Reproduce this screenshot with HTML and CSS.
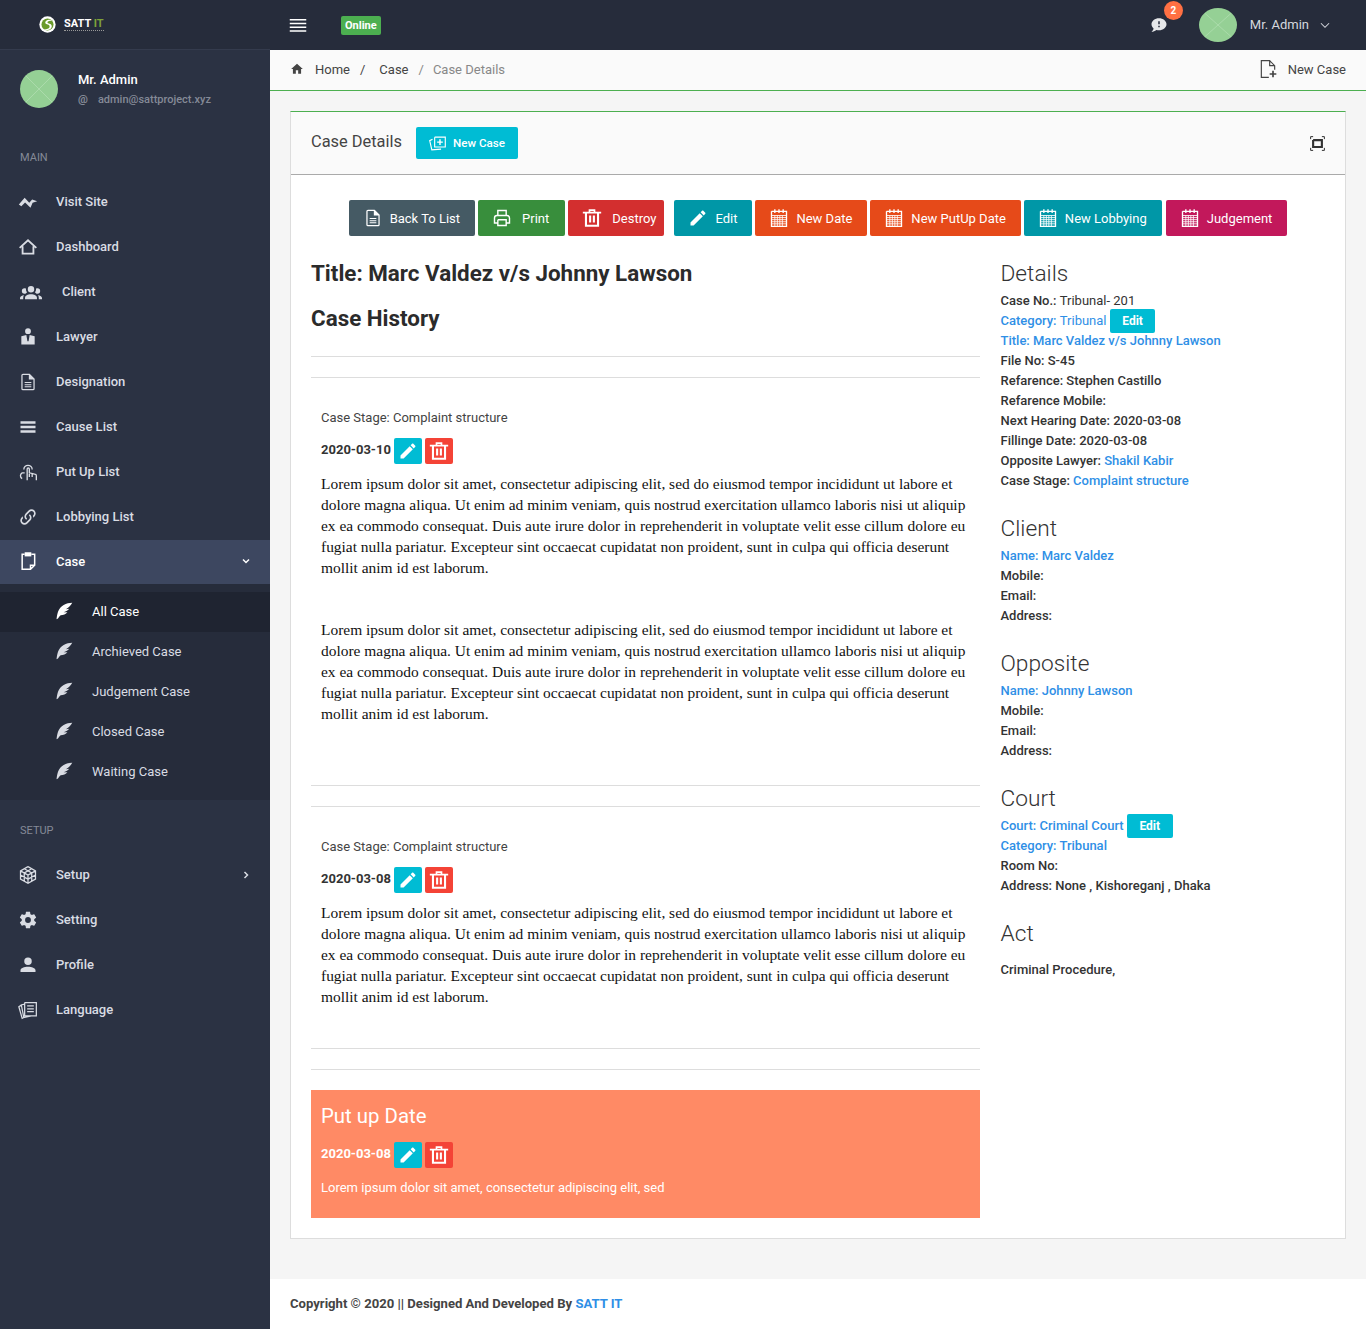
FILE: index.html
```html
<!DOCTYPE html>
<html>
  <head>
    <title>Case Details</title>
    <meta charset="utf-8" />
    <meta name="viewport" content="width=device-width, initial-scale=1.0" />
    <link rel="stylesheet" href="styles.css">
  </head>
  <body>
    <svg class="sprite" xmlns="http://www.w3.org/2000/svg">
      <symbol id="i-menu" viewBox="0 0 24 24"><path d="M1,4H23V6H1V4M1,9H23V11H1V9M1,14H23V16H1V14M1,19H23V21H1V19Z"/></symbol>
      <symbol id="i-home" viewBox="0 0 24 24"><path d="M10,20V14H14V20H19V12H22L12,3L2,12H5V20H10Z"/></symbol>
      <symbol id="i-home-o" viewBox="0 0 24 24"><path fill="none" stroke="currentColor" stroke-width="2.2" d="M2,13L12,4L22,13M5.5,11V20H18.5V11"/></symbol>
      <symbol id="i-pulse" viewBox="0 0 24 24"><path d="M1,15L8,7L13.5,13L17,9L23,11L17.5,13L15,19L8.5,12.5L4,17Z"/></symbol>
      <symbol id="i-group" viewBox="0 0 24 24"><path d="M12,5.5A3.5,3.5 0 0,1 15.5,9A3.5,3.5 0 0,1 12,12.5A3.5,3.5 0 0,1 8.5,9A3.5,3.5 0 0,1 12,5.5M5,8C5.56,8 6.08,8.15 6.53,8.42C6.38,9.85 6.8,11.27 7.66,12.38C7.16,13.34 6.16,14 5,14A3,3 0 0,1 2,11A3,3 0 0,1 5,8M19,8A3,3 0 0,1 22,11A3,3 0 0,1 19,14C17.84,14 16.84,13.34 16.34,12.38C17.2,11.27 17.62,9.85 17.47,8.42C17.92,8.15 18.44,8 19,8M5.5,18.25C5.5,16.18 8.41,14.5 12,14.5C15.59,14.5 18.5,16.18 18.5,18.25V20H5.5V18.25M0,20V18.5C0,17.11 1.89,15.94 4.45,15.6C3.86,16.28 3.5,17.22 3.5,18.25V20H0M24,20H20.5V18.25C20.5,17.22 20.14,16.28 19.55,15.6C22.11,15.94 24,17.11 24,18.5V20Z"/></symbol>
      <symbol id="i-lawyer" viewBox="0 0 24 24"><path d="M12,1.5A3.5,3.5 0 0,1 15.5,5A3.5,3.5 0 0,1 12,8.5A3.5,3.5 0 0,1 8.5,5A3.5,3.5 0 0,1 12,1.5M4,11L10,9.5L11.3,17H12.7L14,9.5L20,11V21H4V11Z"/></symbol>
      <symbol id="i-file" viewBox="0 0 24 24"><path d="M6,2A2,2 0 0,0 4,4V20A2,2 0 0,0 6,22H18A2,2 0 0,0 20,20V8L14,2H6M6,3.5H13V9H18.5V20A.5,.5 0 0,1 18,20.5H6A.5,.5 0 0,1 5.5,20V4A.5,.5 0 0,1 6,3.5M8,12V13.2H16V12H8M8,14.6V15.8H16V14.6H8M8,17.2V18.4H16V17.2H8Z"/></symbol>
      <symbol id="i-lines" viewBox="0 0 24 24"><path d="M3,5H21V8H3V5M3,10.5H21V13.5H3V10.5M3,16H21V19H3V16Z"/></symbol>
      <symbol id="i-touch" viewBox="0 0 24 24"><path fill="none" stroke="currentColor" stroke-width="1.6" d="M7,9A5,5 0 0,1 17,9M5,20A4,4 0 0,1 5,13H8M11,22V8.5A1.3,1.3 0 0,1 13.6,8.5V13L20,14.5A2,2 0 0,1 22,16.5V22M13.6,14V18M17,14.5V18"/></symbol>
      <symbol id="i-link" viewBox="0 0 24 24"><path d="M10.59,13.41C11,13.8 11,14.44 10.59,14.83C10.2,15.22 9.56,15.22 9.17,14.83C7.22,12.88 7.22,9.71 9.17,7.76V7.76L12.71,4.22C14.66,2.27 17.83,2.27 19.78,4.22C21.73,6.17 21.73,9.34 19.78,11.29L18.29,12.78C18.3,11.96 18.17,11.14 17.89,10.36L18.36,9.88C19.54,8.71 19.54,6.81 18.36,5.64C17.19,4.46 15.29,4.46 14.12,5.64L10.59,9.17C9.41,10.34 9.41,12.24 10.59,13.41M13.41,9.17C13.8,8.78 14.44,8.78 14.83,9.17C16.78,11.12 16.78,14.29 14.83,16.24V16.24L11.29,19.78C9.34,21.73 6.17,21.73 4.22,19.78C2.27,17.83 2.27,14.66 4.22,12.71L5.71,11.22C5.7,12.04 5.83,12.86 6.11,13.65L5.64,14.12C4.46,15.29 4.46,17.19 5.64,18.36C6.81,19.54 8.71,19.54 9.88,18.36L13.41,14.83C14.59,13.66 14.59,11.76 13.41,10.59C13,10.2 13,9.56 13.41,9.17Z"/></symbol>
      <symbol id="i-clip" viewBox="0 0 24 24"><path fill="none" stroke="currentColor" stroke-width="1.8" d="M8,4H5V22H15L20,17V4H16M15,22V17H20"/><path d="M8,1.5H16V6.5H8Z"/></symbol>
      <symbol id="i-cube" viewBox="0 0 24 24"><path fill="none" stroke="currentColor" stroke-width="1.5" d="M12,2L21,7V17L12,22L3,17V7L12,2M3,7L12,12L21,7M12,12V22M7.5,4.5L16.5,9.5V19.5M16.5,4.5L7.5,9.5V19.5M3,12L12,17L21,12"/></symbol>
      <symbol id="i-cog" viewBox="0 0 24 24"><path d="M12,15.5A3.5,3.5 0 0,1 8.5,12A3.5,3.5 0 0,1 12,8.5A3.5,3.5 0 0,1 15.5,12A3.5,3.5 0 0,1 12,15.5M19.43,12.97C19.47,12.65 19.5,12.33 19.5,12C19.5,11.67 19.47,11.34 19.43,11L21.54,9.37C21.73,9.22 21.78,8.95 21.66,8.73L19.66,5.27C19.54,5.05 19.27,4.96 19.05,5.05L16.56,6.05C16.04,5.66 15.5,5.32 14.87,5.07L14.5,2.42C14.46,2.18 14.25,2 14,2H10C9.75,2 9.54,2.18 9.5,2.42L9.13,5.07C8.5,5.32 7.96,5.66 7.44,6.05L4.95,5.05C4.73,4.96 4.46,5.05 4.34,5.27L2.34,8.73C2.21,8.95 2.27,9.22 2.46,9.37L4.57,11C4.53,11.34 4.5,11.67 4.5,12C4.5,12.33 4.53,12.65 4.57,12.97L2.46,14.63C2.27,14.78 2.21,15.05 2.34,15.27L4.34,18.73C4.46,18.95 4.73,19.03 4.95,18.95L7.44,17.94C7.96,18.34 8.5,18.68 9.13,18.93L9.5,21.58C9.54,21.82 9.75,22 10,22H14C14.25,22 14.46,21.82 14.5,21.58L14.87,18.93C15.5,18.67 16.04,18.34 16.56,17.94L19.05,18.95C19.27,19.03 19.54,18.95 19.66,18.73L21.66,15.27C21.78,15.05 21.73,14.78 21.54,14.63L19.43,12.97Z"/></symbol>
      <symbol id="i-user" viewBox="0 0 24 24"><path d="M12,3A4.5,4.5 0 0,1 16.5,7.5A4.5,4.5 0 0,1 12,12A4.5,4.5 0 0,1 7.5,7.5A4.5,4.5 0 0,1 12,3M12,14C16.42,14 21,15.79 21,18V20.5H3V18C3,15.79 7.58,14 12,14Z"/></symbol>
      <symbol id="i-news" viewBox="0 0 24 24"><path fill="none" stroke="currentColor" stroke-width="1.5" d="M8,3H22V19H8V3M11,7H19M11,10.5H19M11,14H19M8,5L4,6L7,21L16,19M4,6L1,8L5,22L7,21"/></symbol>
      <symbol id="i-feather" viewBox="0 0 24 24"><path d="M23,1C15,1 7,5 4,13C3,16 2.5,19 2,23L4,22C5,20 6,18.5 7.5,17.5C11,17.5 14.5,16 16.5,13.5L11.5,13.5C15,12.5 17.5,11 19,9L14.5,9.5C18,7.5 21,5 23,1Z"/></symbol>
      <symbol id="i-down" viewBox="0 0 24 24"><path fill="none" stroke="currentColor" stroke-width="3" d="M6,9L12,15L18,9"/></symbol>
      <symbol id="i-down-thin" viewBox="0 0 24 24"><path fill="none" stroke="currentColor" stroke-width="1.8" d="M5,9L12,16L19,9"/></symbol>
      <symbol id="i-right" viewBox="0 0 24 24"><path fill="none" stroke="currentColor" stroke-width="3" d="M9,6L15,12L9,18"/></symbol>
      <symbol id="i-chat" viewBox="0 0 24 24"><path d="M12,3C6.5,3 2,6.58 2,11C2.05,13.15 3.06,15.17 4.75,16.5C4.75,17.1 4.33,18.67 2,21C4.37,20.89 6.64,20 8.47,18.5C9.61,18.83 10.81,19 12,19C17.5,19 22,15.42 22,11C22,6.58 17.5,3 12,3M13,15H11V13H13V15M13,11H11V7H13V11Z"/></symbol>
      <symbol id="i-file-plus" viewBox="0 0 24 24"><path fill="none" stroke="currentColor" stroke-width="1.4" d="M13,22H4V2H14L20,8V13M14,2V8H20"/><path d="M17,14H19V17H22V19H19V22H17V19H14V17H17V14Z"/></symbol>
      <symbol id="i-full" viewBox="0 0 24 24"><path fill="none" stroke="currentColor" stroke-width="3.4" d="M5,6.5H19V17.5H5V6.5"/><path fill="none" stroke="currentColor" stroke-width="1.6" d="M1,5V1H5M19,1H23V5M23,19V23H19M5,23H1V19"/></symbol>
      <symbol id="i-cards" viewBox="0 0 24 24"><path fill="none" stroke="currentColor" stroke-width="1.6" d="M8,3H23V17H8V3M5,6L1,8L4,21L17,20"/><path d="M14.5,6H16.5V9H19.5V11H16.5V14H14.5V11H11.5V9H14.5V6Z"/></symbol>
      <symbol id="i-print" viewBox="0 0 24 24"><path fill="none" stroke="currentColor" stroke-width="1.7" d="M7,8V3H17V8M7,18H3V12A3,3 0 0,1 6,9H18A3,3 0 0,1 21,12V18H17M7,14H17V21H7V14"/></symbol>
      <symbol id="i-trash" viewBox="0 0 24 24"><path d="M8,1.5H16V4.5H23V6.5H20.5V22.5H3.5V6.5H1V4.5H8V1.5M10,3.5V4.5H14V3.5H10M6,6.5V20H18V6.5H6M8.5,9H11V17.5H8.5V9M13,9H15.5V17.5H13V9Z"/></symbol>
      <symbol id="i-pencil" viewBox="0 0 24 24"><path d="M20.71,7.04C21.1,6.65 21.1,6 20.71,5.63L18.37,3.29C18,2.9 17.35,2.9 16.96,3.29L15.12,5.12L18.87,8.87M3,17.25V21H6.75L17.81,9.93L14.06,6.18L3,17.25Z"/></symbol>
      <symbol id="i-cal" viewBox="0 0 24 24"><path fill="none" stroke="currentColor" stroke-width="1.6" d="M3,4H21V22H3V4M7,1.5V6M17,1.5V6M12,1.5V6"/><path fill="none" stroke="currentColor" d="M3,9H21M3,11.5H21M3,14H21M3,16.5H21M3,19H21M7,9V22M10,9V22M13,9V22M16,9V22"/></symbol>
      <symbol id="i-avatar" viewBox="0 0 38 38" preserveAspectRatio="none"><circle cx="19" cy="19" r="19" fill="#95d095"/><path d="M6,6L32,32M32,6L6,32" stroke="#b5e0b5" stroke-width=".7"/></symbol>
    </svg>

    <header class="topbar">
      <div class="brand">
        <svg class="logo" viewBox="0 0 24 24"><circle cx="12" cy="12" r="11.5" fill="#fff"/><circle cx="12" cy="12" r="8.5" fill="#6a9a2b"/><path d="M19,6C14,4 8,6 9,10C10,13 15,11 15,15C15,18 10,19 6,18C10,21 18,20 18,14C18,10 12,11 12,9C12,7 16,7 19,6Z" fill="#fff"/></svg>
        <span class="brand-name">SATT <span class="brand-it">IT</span></span>
      </div>
      <div class="topbar-main">
        <svg class="ico menu-ico"><use href="#i-menu"/></svg>
        <span class="online">Online</span>
        <div class="topbar-right">
          <span class="notify">
            <svg class="ico chat-ico"><use href="#i-chat"/></svg>
            <span class="notify-count">2</span>
          </span>
          <svg class="top-avatar"><use href="#i-avatar"/></svg>
          <span class="top-name">Mr. Admin</span>
          <svg class="ico top-caret"><use href="#i-down-thin"/></svg>
        </div>
      </div>
    </header>

    <div class="layout">
      <aside class="sidebar">
        <div class="profile">
          <svg class="side-avatar"><use href="#i-avatar"/></svg>
          <div>
            <div class="profile-name">Mr. Admin</div>
            <div class="profile-mail"><span class="at">@</span>admin@sattproject.xyz</div>
          </div>
        </div>

        <div class="nav-label nav-label-main">MAIN</div>
        <a class="nav-item"><svg class="ico"><use href="#i-pulse"/></svg>Visit Site</a>
        <a class="nav-item"><svg class="ico"><use href="#i-home-o"/></svg>Dashboard</a>
        <a class="nav-item nav-client"><svg class="ico"><use href="#i-group"/></svg>Client</a>
        <a class="nav-item"><svg class="ico"><use href="#i-lawyer"/></svg>Lawyer</a>
        <a class="nav-item"><svg class="ico"><use href="#i-file"/></svg>Designation</a>
        <a class="nav-item"><svg class="ico"><use href="#i-lines"/></svg>Cause List</a>
        <a class="nav-item"><svg class="ico"><use href="#i-touch"/></svg>Put Up List</a>
        <a class="nav-item"><svg class="ico"><use href="#i-link"/></svg>Lobbying List</a>
        <a class="nav-item active"><svg class="ico"><use href="#i-clip"/></svg>Case<svg class="ico nav-caret"><use href="#i-down"/></svg></a>
        <div class="subnav">
          <a class="sub-item current"><svg class="ico"><use href="#i-feather"/></svg>All Case</a>
          <a class="sub-item"><svg class="ico"><use href="#i-feather"/></svg>Archieved Case</a>
          <a class="sub-item"><svg class="ico"><use href="#i-feather"/></svg>Judgement Case</a>
          <a class="sub-item"><svg class="ico"><use href="#i-feather"/></svg>Closed Case</a>
          <a class="sub-item"><svg class="ico"><use href="#i-feather"/></svg>Waiting Case</a>
        </div>

        <div class="nav-label nav-label-setup">SETUP</div>
        <a class="nav-item"><svg class="ico"><use href="#i-cube"/></svg>Setup<svg class="ico nav-caret"><use href="#i-right"/></svg></a>
        <a class="nav-item"><svg class="ico"><use href="#i-cog"/></svg>Setting</a>
        <a class="nav-item"><svg class="ico"><use href="#i-user"/></svg>Profile</a>
        <a class="nav-item"><svg class="ico"><use href="#i-news"/></svg>Language</a>
      </aside>

      <main class="main">
        <div class="crumbs">
          <svg class="ico crumb-home"><use href="#i-home"/></svg>
          <span class="crumb">Home</span><span class="crumb-sep">/</span>
          <span class="crumb">Case</span><span class="crumb-sep crumb-sep-last">/</span>
          <span class="crumb-now">Case Details</span>
          <span class="crumb-action"><svg class="ico"><use href="#i-file-plus"/></svg>New Case</span>
        </div>

        <section class="card">
          <div class="card-head">
            <h2 class="card-title">Case Details</h2>
            <a class="btn-new"><svg class="ico"><use href="#i-cards"/></svg>New Case</a>
            <svg class="ico card-full"><use href="#i-full"/></svg>
          </div>

          <div class="card-body">
            <div class="actions">
              <a class="btn btn-slate"><svg class="ico"><use href="#i-file"/></svg>Back To List</a>
              <a class="btn btn-green btn-wide"><svg class="ico"><use href="#i-print"/></svg>Print</a>
              <a class="btn btn-red btn-wide btn-tight"><svg class="ico"><use href="#i-trash"/></svg>Destroy</a>
              <a class="btn btn-teal btn-edit"><svg class="ico"><use href="#i-pencil"/></svg>Edit</a>
              <a class="btn btn-orange"><svg class="ico"><use href="#i-cal"/></svg>New Date</a>
              <a class="btn btn-orange"><svg class="ico"><use href="#i-cal"/></svg>New PutUp Date</a>
              <a class="btn btn-teal"><svg class="ico"><use href="#i-cal"/></svg>New Lobbying</a>
              <a class="btn btn-pink"><svg class="ico"><use href="#i-cal"/></svg>Judgement</a>
            </div>

            <div class="columns">
              <div class="history">
                <h1 class="case-title">Title: Marc Valdez v/s Johnny Lawson</h1>
                <h1 class="case-sub">Case History</h1>
                <hr class="rule rule-first">
                <hr class="rule">

                <article class="entry">
                  <p class="stage">Case Stage: Complaint structure</p>
                  <div class="date-row">
                    <b>2020-03-10</b>
                    <a class="tool tool-edit"><svg class="ico"><use href="#i-pencil"/></svg></a>
                    <a class="tool tool-del"><svg class="ico"><use href="#i-trash"/></svg></a>
                  </div>
                  <p class="lorem">Lorem ipsum dolor sit amet, consectetur adipiscing elit, sed do eiusmod tempor incididunt ut labore et dolore magna aliqua. Ut enim ad minim veniam, quis nostrud exercitation ullamco laboris nisi ut aliquip ex ea commodo consequat. Duis aute irure dolor in reprehenderit in voluptate velit esse cillum dolore eu fugiat nulla pariatur. Excepteur sint occaecat cupidatat non proident, sunt in culpa qui officia deserunt mollit anim id est laborum.</p>
                  <p class="lorem lorem-next">Lorem ipsum dolor sit amet, consectetur adipiscing elit, sed do eiusmod tempor incididunt ut labore et dolore magna aliqua. Ut enim ad minim veniam, quis nostrud exercitation ullamco laboris nisi ut aliquip ex ea commodo consequat. Duis aute irure dolor in reprehenderit in voluptate velit esse cillum dolore eu fugiat nulla pariatur. Excepteur sint occaecat cupidatat non proident, sunt in culpa qui officia deserunt mollit anim id est laborum.</p>
                </article>
                <hr class="rule">
                <hr class="rule">

                <article class="entry entry-short">
                  <p class="stage">Case Stage: Complaint structure</p>
                  <div class="date-row">
                    <b>2020-03-08</b>
                    <a class="tool tool-edit"><svg class="ico"><use href="#i-pencil"/></svg></a>
                    <a class="tool tool-del"><svg class="ico"><use href="#i-trash"/></svg></a>
                  </div>
                  <p class="lorem">Lorem ipsum dolor sit amet, consectetur adipiscing elit, sed do eiusmod tempor incididunt ut labore et dolore magna aliqua. Ut enim ad minim veniam, quis nostrud exercitation ullamco laboris nisi ut aliquip ex ea commodo consequat. Duis aute irure dolor in reprehenderit in voluptate velit esse cillum dolore eu fugiat nulla pariatur. Excepteur sint occaecat cupidatat non proident, sunt in culpa qui officia deserunt mollit anim id est laborum.</p>
                </article>
                <hr class="rule">
                <hr class="rule">

                <div class="putup">
                  <h3 class="putup-title">Put up Date</h3>
                  <div class="date-row">
                    <b>2020-03-08</b>
                    <a class="tool tool-edit"><svg class="ico"><use href="#i-pencil"/></svg></a>
                    <a class="tool tool-del"><svg class="ico"><use href="#i-trash"/></svg></a>
                  </div>
                  <p class="putup-text">Lorem ipsum dolor sit amet, consectetur adipiscing elit, sed</p>
                </div>
              </div>

              <div class="info">
                <h3 class="info-title">Details</h3>
                <div class="info-line">Case No.: <span class="plain">Tribunal- 201</span></div>
                <div class="info-line blue">Category: <span class="plain">Tribunal</span> <a class="btn-mini">Edit</a></div>
                <div class="info-line blue">Title: Marc Valdez v/s Johnny Lawson</div>
                <div class="info-line">File No: S-45</div>
                <div class="info-line">Refarence: Stephen Castillo</div>
                <div class="info-line">Refarence Mobile:</div>
                <div class="info-line">Next Hearing Date: 2020-03-08</div>
                <div class="info-line">Fillinge Date: 2020-03-08</div>
                <div class="info-line">Opposite Lawyer: <span class="blue">Shakil Kabir</span></div>
                <div class="info-line">Case Stage: <span class="blue">Complaint structure</span></div>

                <h3 class="info-title info-gap">Client</h3>
                <div class="info-line blue">Name: Marc Valdez</div>
                <div class="info-line">Mobile:</div>
                <div class="info-line">Email:</div>
                <div class="info-line">Address:</div>

                <h3 class="info-title info-gap">Opposite</h3>
                <div class="info-line blue">Name: Johnny Lawson</div>
                <div class="info-line">Mobile:</div>
                <div class="info-line">Email:</div>
                <div class="info-line">Address:</div>

                <h3 class="info-title info-gap">Court</h3>
                <div class="info-line blue">Court: Criminal Court <a class="btn-mini">Edit</a></div>
                <div class="info-line blue">Category: Tribunal</div>
                <div class="info-line">Room No:</div>
                <div class="info-line">Address: None , Kishoreganj , Dhaka</div>

                <h3 class="info-title info-gap">Act</h3>
                <div class="info-line info-act">Criminal Procedure,</div>
              </div>
            </div>
          </div>
        </section>

        <footer class="footer">Copyright © 2020 || Designed And Developed By <span class="blue">SATT IT</span></footer>
      </main>
    </div>
  </body>
</html>
```

FILE: styles.css
```css
* {
  box-sizing: border-box;
}
body {
  margin: 0;
  min-height: 100vh;
  background-color: #2b3243;
  color: #333;
  font-family: Roboto, 'Liberation Sans', sans-serif;
  font-size: 13px;
}
a {
  color: inherit;
  text-decoration: none;
}
p, h1, h2, h3 {
  margin: 0;
}
.sprite {
  display: none;
}
.ico {
  display: block;
  flex: none;
  width: 18px;
  height: 18px;
  fill: currentColor;
}

/* top bar */
.topbar {
  display: flex;
  height: 50px;
  background-color: #262c3b;
  color: #fff;
}
.brand {
  display: flex;
  align-items: center;
  width: 270px;
  padding-left: 39px;
  border-bottom: 1px solid #343b4d;
}
.logo {
  width: 17px;
  height: 17px;
  margin-right: 8px;
}
.brand-name {
  font-size: 11px;
  font-weight: 700;
  margin-top: -2px;
  border-bottom: 1px dotted #999;
}
.brand-it {
  color: #7da23a;
}
.topbar-main {
  flex: 1;
  display: flex;
  align-items: center;
  padding: 0 34px 0 19px;
}
.menu-ico {
  width: 18px;
  height: 18px;
}
.online {
  margin-left: 34px;
  padding: 3px 4px;
  border-radius: 2px;
  background-color: #4caf50;
  font-size: 11px;
  font-weight: 700;
  line-height: 13px;
}
.topbar-right {
  margin-left: auto;
  display: flex;
  align-items: center;
  color: #d5d8de;
}
.notify {
  position: relative;
  margin-right: 31px;
}
.chat-ico {
  color: #e6e8ea;
}
.notify-count {
  position: absolute;
  top: -15px;
  left: 14px;
  width: 19px;
  height: 19px;
  border-radius: 50%;
  background-color: #ff7043;
  color: #fff;
  font-size: 10px;
  font-weight: 700;
  line-height: 19px;
  text-align: center;
}
.top-avatar {
  width: 38px;
  height: 34px;
}
.top-name {
  margin: -2px 0 0 13px;
  font-size: 13px;
}
.top-caret {
  width: 14px;
  height: 14px;
  margin-left: 9px;
}

/* sidebar */
.layout {
  display: flex;
  min-height: 1279px;
}
.sidebar {
  width: 270px;
  flex: none;
  color: #d9dce3;
  font-weight: 500;
}
.profile {
  display: flex;
  padding: 20px 0 0 20px;
}
.side-avatar {
  width: 38px;
  height: 38px;
  margin-right: 20px;
}
.profile-name {
  margin-top: 1px;
  color: #fff;
  font-size: 13px;
  font-weight: 500;
  line-height: 18px;
}
.profile-mail {
  margin-top: 3px;
  color: #858a97;
  font-size: 11px;
  line-height: 16px;
}
.at {
  margin-right: 10px;
  font-weight: 700;
}
.nav-label {
  padding-left: 20px;
  color: #858a97;
  font-size: 11px;
  font-weight: 400;
  line-height: 14px;
}
.nav-label-main {
  margin: 43px 0 14px;
}
.nav-label-setup {
  margin: 24px 0 14px;
}
.nav-item {
  display: flex;
  align-items: center;
  height: 45px;
  padding: 0 18px 0 18px;
  font-size: 13px;
}
.nav-item .ico {
  width: 20px;
  height: 20px;
  margin-right: 18px;
}
.nav-item.nav-client .ico {
  width: 22px;
  height: 22px;
  margin: 0 20px 0 2px;
}
.nav-item .nav-caret {
  width: 12px;
  height: 12px;
  margin: 0 0 0 auto;
}
.active {
  height: 44px;
  margin-top: 1px;
  padding-bottom: 2px;
  background-color: #3d4760;
  color: #fff;
}
.subnav {
  padding: 8px 0;
  background-color: #262c3b;
}
.sub-item {
  display: flex;
  align-items: center;
  height: 40px;
  padding: 0 0 2px 55px;
  font-weight: 400;
  font-size: 13px;
}
.sub-item .ico {
  margin-right: 19px;
}
.current {
  background-color: #1f2431;
  color: #fff;
}

/* main area */
.main {
  flex: 1;
  display: flex;
  flex-direction: column;
  background-color: #f5f5f5;
}
.crumbs {
  display: flex;
  align-items: center;
  height: 41px;
  padding: 0 20px 2px;
  background-color: #fafafa;
  border-bottom: 1px solid #4caf50;
  font-size: 13px;
  color: #444;
}
.crumb-home {
  width: 14px;
  height: 14px;
  margin-right: 11px;
}
.crumb-sep {
  margin: 0 14px 0 10px;
}
.crumb-sep-last {
  margin-right: 9px;
  color: #888;
}
.crumb-now {
  color: #888;
}
.crumb-action {
  margin-left: auto;
  display: flex;
  align-items: center;
}
.crumb-action .ico {
  width: 20px;
  height: 20px;
  margin-right: 10px;
}
.card {
  margin: 20px 20px 0;
  background-color: #fff;
  border: 1px solid #ddd;
  border-top-color: #4caf50;
}
.card-head {
  display: flex;
  align-items: center;
  height: 63px;
  padding: 0 20px;
  background-color: #fafafa;
  border-bottom: 1px solid #aaa;
}
.card-title {
  margin-top: -3px;
  font-size: 16.4px;
  font-weight: 400;
  color: #444;
}
.btn-new {
  display: flex;
  align-items: center;
  height: 32px;
  margin-left: 14px;
  padding: 0 13px;
  border-radius: 2px;
  background-color: #00bcd4;
  color: #fff;
  font-size: 11.6px;
  font-weight: 500;
}
.btn-new .ico {
  width: 17px;
  height: 17px;
  margin-right: 7px;
}
.card-full {
  width: 15px;
  height: 15px;
  margin-left: auto;
  color: #333;
}
.card-body {
  padding: 25px 20px 20px;
}
.actions {
  display: flex;
  justify-content: center;
  gap: 3px;
}
.btn {
  display: flex;
  align-items: center;
  height: 36px;
  padding: 0 15px 0 14px;
  border-radius: 2px;
  color: #fff;
  font-size: 13px;
}
.btn .ico {
  width: 20px;
  height: 20px;
  margin-right: 7px;
}
.btn-wide .ico {
  margin-right: 10px;
}
.btn-tight {
  padding-right: 8px;
}
.btn-green {
  padding-right: 16px;
}
.btn-slate { background-color: #455a64; }
.btn-green { background-color: #388e3c; }
.btn-red { background-color: #d32f2f; }
.btn-teal { background-color: #0097a7; }
.btn-orange { background-color: #e64a19; }
.btn-pink { background-color: #c2185b; margin-left: 1px; }
.btn-edit {
  margin-left: 7px;
}
.columns {
  display: grid;
  grid-template-columns: 669px 1fr;
  column-gap: 20.5px;
  margin-top: 19px;
}

/* history column */
.case-title, .case-sub {
  font-size: 22.4px;
  font-weight: 700;
  line-height: 36px;
  color: #2b2b2b;
}
.case-sub {
  margin-top: 9px;
}
.rule {
  margin: 20px 0 0;
  border: 0;
  border-top: 1px solid #ddd;
}
.entry {
  padding: 30px 10px 41px;
}
.entry-short {
  padding-bottom: 21px;
}
.stage {
  font-size: 13px;
  line-height: 20px;
  color: #444;
}
.date-row {
  display: flex;
  align-items: center;
  gap: 3px;
  margin-top: 10px;
  font-size: 13px;
}
.date-row b {
  margin-bottom: 3px;
}
.tool {
  display: flex;
  align-items: center;
  justify-content: center;
  width: 28px;
  height: 26px;
  border-radius: 2px;
  color: #fff;
}
.tool .ico {
  width: 20px;
  height: 20px;
}
.tool-edit {
  background-color: #00bcd4;
}
.tool-del {
  background-color: #f44336;
}
.lorem {
  margin-top: 9px;
  font-family: 'Liberation Serif', serif;
  font-size: 15.45px;
  line-height: 21px;
  color: #111;
}
.lorem-next {
  margin-top: 41px;
}
.putup {
  margin-top: 20px;
  height: 128px;
  padding: 14px 10px 0;
  background-color: #ff8a65;
  color: #fff;
}
.putup-title {
  font-size: 20.4px;
  font-weight: 400;
  line-height: 25px;
}
.putup .date-row {
  margin-top: 13px;
}
.putup-text {
  margin-top: 10px;
  font-size: 13px;
  line-height: 20px;
}

/* details column */
.info {
  padding-top: 5px;
}
.info-title {
  margin-bottom: 3px;
  font-size: 22.7px;
  font-weight: 300;
  line-height: 28px;
  color: #333;
}
.info-gap {
  margin-top: 24px;
}
.info-line {
  height: 20px;
  font-size: 13px;
  font-weight: 500;
  line-height: 20px;
  color: #333;
}
.plain {
  font-weight: 400;
}
.blue {
  color: #2f8fe6;
}
.btn-mini {
  display: inline-block;
  vertical-align: top;
  height: 24px;
  margin: -2px 0;
  padding: 0 12.5px;
  border-radius: 2px;
  background-color: #00bcd4;
  color: #fff;
  font-size: 12px;
  font-weight: 700;
  line-height: 24px;
}
.info-act {
  margin-top: 12px;
}

.footer {
  margin-top: auto;
  height: 50px;
  padding: 0 20px;
  background-color: #fff;
  font-size: 13.1px;
  font-weight: 700;
  line-height: 50px;
  color: #444;
}
```
